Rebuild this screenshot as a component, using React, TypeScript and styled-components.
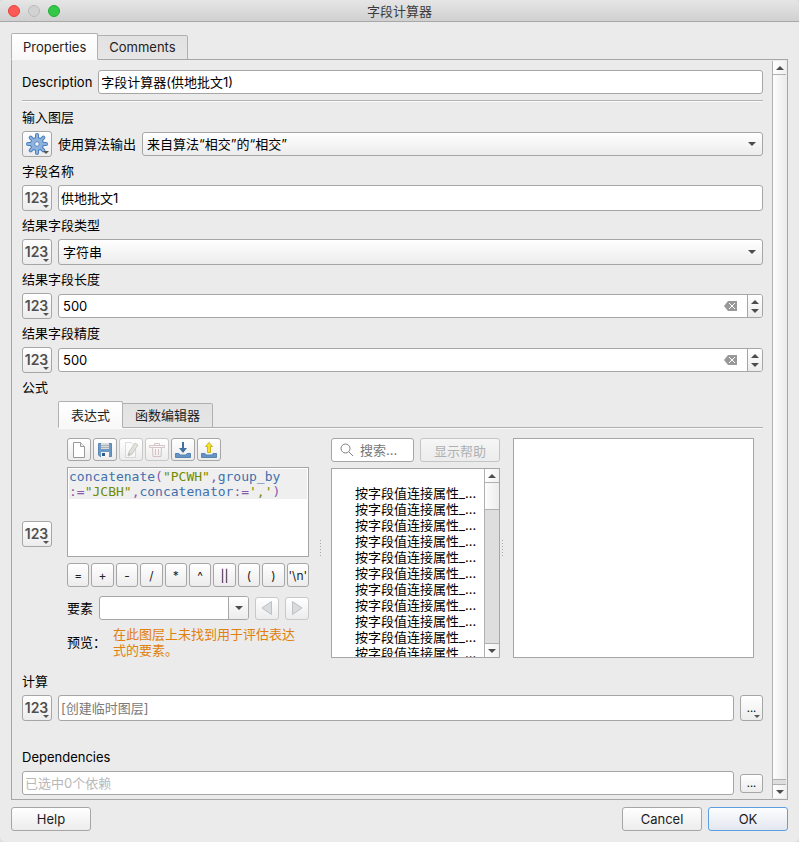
import React, { useState } from "react";
import styled, { createGlobalStyle, css } from "styled-components";

const sans = `Inter, "Noto Sans CJK SC", sans-serif`;
const edge = "#a6a6a6";

const GlobalStyle = createGlobalStyle`
  *, *::before, *::after { box-sizing: border-box; }
  body { margin: 0; background: #dcdcdc; }
  body, button, input, select { font-family: ${sans}; font-size: 13px; color: #000; }
  button, input, select { margin: 0; }
`;

const Dialog = styled.form`
  display: flex;
  flex-direction: column;
  min-height: 100vh;
  background: #ebebeb;
  border-radius: 5px;
  overflow: hidden;
`;

const TitleBar = styled.header`
  display: grid;
  grid-template-columns: 1fr auto 1fr;
  align-items: center;
  height: 22px;
  padding: 0 8px;
  background: linear-gradient(#e6e6e6, #d0d0d0);
  border-bottom: 1px solid #a8a8a8;
`;

const Lights = styled.div`
  display: flex;
  gap: 8px;
`;

const Light = styled.button<{ $fill: string; $ring: string }>`
  width: 12px;
  height: 12px;
  padding: 0;
  border-radius: 50%;
  background: ${(p) => p.$fill};
  border: 1px solid ${(p) => p.$ring};
`;

const Title = styled.h1`
  margin: 0;
  font-size: 13px;
  font-weight: 400;
  line-height: 20px;
  color: #3c3c3c;
`;

const Body = styled.main`
  flex: 1;
  display: flex;
  flex-direction: column;
  padding: 11px 11px 7px;
`;

const TabBar = styled.div`
  display: flex;
  align-items: flex-end;
  margin-bottom: -1px;
`;

const Tab = styled.button<{ $active?: boolean; $pad?: number }>`
  height: 25px;
  padding: 0 ${(p) => p.$pad ?? 11}px;
  line-height: 23px;
  color: #222;
  background: linear-gradient(#e2e2e2, #e6e6e6);
  border: 1px solid #b0b0b0;
  border-left: 0;
  border-radius: 0 2px 0 0;
  ${(p) =>
    p.$active &&
    css`
      height: 27px;
      padding-top: 1px;
      line-height: 25px;
      background: linear-gradient(#fff, #f8f8f8);
      border-left: 1px solid #b0b0b0;
      border-bottom-color: #f8f8f8;
      border-radius: 2px 2px 0 0;
      z-index: 1;
    `}
`;

const Pane = styled.section`
  flex: 1;
  display: flex;
  border: 1px solid ${edge};
  padding: 1px;
`;

const Fields = styled.div`
  flex: 1;
  min-width: 0;
  display: flex;
  flex-direction: column;
  padding: 9px 9px 3px;
`;

const Row = styled.div<{ $gap?: number }>`
  display: flex;
  align-items: center;
  gap: ${(p) => p.$gap ?? 6}px;
`;

const Caption = styled.label`
  display: block;
  white-space: nowrap;
  line-height: 24px;
`;

const FieldLabel = styled.label`
  display: block;
  height: 28px;
  line-height: 28px;
`;

const Rule = styled.hr`
  width: 100%;
  height: 2px;
  margin: 6px 0 1px;
  border: 0;
  border-top: 1px solid #b4b4b4;
  background: #fafafa;
`;

const TextBox = styled.input<{ $tall?: boolean; $dim?: string }>`
  flex: 1;
  min-width: 0;
  height: ${(p) => (p.$tall ? 26 : 24)}px;
  padding: 0 2px 1px;
  background: #fff;
  border: 1px solid ${edge};
  border-radius: 3px;
  outline: none;
  &::placeholder { color: ${(p) => p.$dim ?? "#7a7a7a"}; opacity: 1; }
`;

const raised = css`
  background: linear-gradient(#ffffff, #ececec);
  border: 1px solid ${edge};
  border-radius: 3px;
`;

const SelectFrame = styled.div<{ $tall?: boolean }>`
  flex: 1;
  min-width: 0;
  height: ${(p) => (p.$tall ? 26 : 24)}px;
  display: grid;
  grid-template-columns: 1fr 14px;
  align-items: center;
  ${raised}
  select {
    grid-area: 1 / 1 / 2 / 3;
    width: 100%;
    height: 100%;
    padding: 0 20px 0 4px;
    appearance: none;
    background: none;
    border: 0;
    outline: none;
  }
  svg { grid-area: 1 / 2; pointer-events: none; }
`;

const OverrideButton = styled.button`
  position: relative;
  flex: none;
  width: 30px;
  height: 26px;
  padding: 0 1px 1px 0;
  display: flex;
  align-items: center;
  justify-content: center;
  font-size: 14px;
  font-weight: 600;
  color: #505050;
  ${raised}
`;

const MenuMark = styled.svg`
  position: absolute;
  right: 2px;
  bottom: 2px;
`;

const SpinBox = styled.div`
  flex: 1;
  min-width: 0;
  height: 24px;
  display: flex;
  align-items: stretch;
  overflow: hidden;
  background: #fff;
  border: 1px solid ${edge};
  border-radius: 3px;
`;

const SpinInput = styled.input`
  flex: 1;
  min-width: 0;
  padding: 0 4px;
  border: 0;
  outline: none;
  background: none;
`;

const BareButton = styled.button`
  display: flex;
  align-items: center;
  justify-content: center;
  padding: 0;
  border: 0;
  background: none;
`;

const ClearButton = styled(BareButton)`
  width: 15px;
  margin-right: 9px;
`;

const Steps = styled.div`
  width: 15px;
  display: grid;
  grid-template-rows: 1fr 1fr;
  padding: 2px 0;
  border-left: 1px solid ${edge};
  background: linear-gradient(#fff, #ececec);
`;

const ScrollRail = styled.div<{ $width: number }>`
  flex: none;
  width: ${(p) => p.$width}px;
  display: flex;
  flex-direction: column;
  border-left: 1px solid #b0b0b0;
  background: #dedede;
`;

const ScrollArrow = styled(BareButton)`
  flex: none;
  height: 13px;
  background: linear-gradient(90deg, #fff, #f0f0f0);
`;

const Thumb = styled.div<{ $size?: number }>`
  ${(p) => (p.$size ? `height: ${p.$size}px;` : "flex: 1;")}
  border: solid #b0b0b0;
  border-width: 1px 0;
  background: linear-gradient(90deg, #fdfdfd, #ececec);
`;

const Groove = styled.div<{ $size?: number }>`
  ${(p) => (p.$size ? `height: ${p.$size}px;` : "flex: 1;")}
  border-bottom: 1px solid #b0b0b0;
`;

const Builder = styled.div`
  flex: 1;
  min-width: 0;
`;

const BuilderBody = styled.div`
  display: grid;
  grid-template-columns: minmax(0, 242fr) 22px minmax(0, 169fr) 13px minmax(0, 241fr);
  padding: 10px 9px 9px;
  border-top: 1px solid #b0b0b0;
  box-shadow: inset 0 1px #fafafa;
`;

const Column = styled.div`
  display: flex;
  flex-direction: column;
  gap: 6px;
  min-width: 0;
`;

const Handle = styled.div<{ $near?: boolean }>`
  align-self: center;
  justify-self: ${(p) => (p.$near ? "start" : "center")};
  width: 1px;
  height: 17px;
  margin-left: ${(p) => (p.$near ? 2 : 0)}px;
  background: repeating-linear-gradient(#aaa 0 1px, transparent 1px 3px);
`;

const ToolButton = styled.button`
  width: 24px;
  height: 23px;
  padding: 0;
  display: flex;
  align-items: center;
  justify-content: center;
  ${raised}
  &:disabled { border-color: #c8c8c8; }
`;

const Code = styled.div`
  height: 90px;
  padding: 1px;
  background: #fff;
  border: 1px solid ${edge};
  outline: none;
  font-family: "DejaVu Sans Mono", monospace;
  font-size: 13px;
  line-height: 15px;
  white-space: pre-wrap;
  word-break: break-all;
`;

const CodeLine = styled.div`
  background: #efefef;
`;

const Token = styled.span<{ $kind: "name" | "op" | "text" }>`
  color: ${(p) => ({ name: "#4271ae", op: "#8959a8", text: "#718c00" })[p.$kind]};
`;

const Operators = styled.div`
  display: grid;
  grid-template-columns: repeat(10, minmax(0, 1fr));
  gap: 2px;
`;

const OperatorButton = styled.button`
  height: 24px;
  padding: 0;
  white-space: nowrap;
  font-size: 12px;
  color: #222;
  ${raised}
`;

const FeatureRow = styled(Row)`
  margin-top: 3px;
`;

const Combo = styled.div`
  flex: 1;
  min-width: 0;
  height: 24px;
  display: flex;
  overflow: hidden;
  background: #fff;
  border: 1px solid ${edge};
  border-radius: 3px;
`;

const ComboButton = styled(BareButton)`
  width: 20px;
  border-left: 1px solid ${edge};
  background: linear-gradient(#fff, #ececec);
`;

const Preview = styled.div`
  display: grid;
  grid-template-columns: 46px 1fr;
  align-items: center;
  line-height: 16px;
`;

const Warning = styled.output`
  padding-right: 8px;
  color: #e0800d;
`;

const SearchRow = styled.div`
  display: grid;
  grid-template-columns: minmax(0, 83fr) minmax(0, 80fr);
  gap: 6px;
`;

const Search = styled.label`
  height: 24px;
  display: flex;
  align-items: center;
  gap: 6px;
  padding-left: 8px;
  background: #fff;
  border: 1px solid ${edge};
  border-radius: 3px;
  svg { flex: none; }
  input {
    width: 100%;
    min-width: 0;
    padding: 0;
    border: 0;
    outline: none;
    background: none;
  }
  input::placeholder { color: #777; opacity: 1; }
`;

const HelpToggle = styled.button`
  height: 24px;
  padding: 0;
  ${raised}
  &:disabled { border-color: #c4c4c4; color: #b0b0b0; background: linear-gradient(#f6f6f6, #ececec); }
`;

const ListFrame = styled.div`
  display: flex;
  height: 190px;
  background: #fff;
  border: 1px solid ${edge};
`;

const FunctionList = styled.ul`
  flex: 1;
  min-width: 0;
  margin: 0;
  padding: 16px 0 0 23px;
  overflow: hidden;
  list-style: none;
  line-height: 16px;
  white-space: nowrap;
`;

const HelpView = styled.div`
  background: #fff;
  border: 1px solid ${edge};
`;

const BrowseButton = styled.button<{ $tall?: boolean }>`
  position: relative;
  flex: none;
  width: 23px;
  height: ${(p) => (p.$tall ? 26 : 19)}px;
  padding: 0;
  font-size: 11px;
  line-height: 12px;
  ${raised}
`;

const DependenciesLabel = styled(FieldLabel)`
  margin-top: 22px;
`;

const Footer = styled.footer`
  display: flex;
  gap: 6px;
  padding: 0 11px 11px;
`;

const PushButton = styled.button<{ $primary?: boolean }>`
  width: 80px;
  height: 24px;
  padding: 0;
  color: #1c1c1c;
  ${raised}
  ${(p) =>
    p.$primary &&
    css`
      border-color: #5e9fe4;
      background: linear-gradient(#fdfdfe, #e2e7ef);
    `}
`;

const Spacer = styled.span`
  flex: 1;
`;

const Arrow = ({ up }: { up?: boolean }) => (
  <svg width="8" height="4" viewBox="0 0 8 4" aria-hidden="true">
    <path d={up ? "M0 4L4 0L8 4Z" : "M0 0H8L4 4Z"} fill="#4c4c4c" />
  </svg>
);

const Mark = () => (
  <MenuMark width="6" height="3" viewBox="0 0 6 3" aria-hidden="true">
    <path d="M0 0H6L3 3Z" fill="#555" />
  </MenuMark>
);

const spokes = [0, 45, 90, 135, 180, 225, 270, 315];

const Gear = () => (
  <svg width="24" height="24" viewBox="0 0 24 24" aria-hidden="true">
    {[
      { stroke: "#4b80bf", w: 4, r: 7, tip: 3 },
      { stroke: "#8fb2dd", w: 2, r: 6, tip: 3 },
    ].map((l) => (
      <g key={l.w} stroke={l.stroke} fill={l.stroke} strokeWidth={l.w} strokeLinecap="round">
        {spokes.map((a) => (
          <path key={a} d={`M12 8V${l.tip}`} transform={`rotate(${a} 12 12)`} />
        ))}
        <circle cx="12" cy="12" r={l.r} stroke="none" />
      </g>
    ))}
    <circle cx="12" cy="12" r="2.3" fill="#f5f5f5" stroke="#5a8bc6" />
  </svg>
);

const Override = ({ gear }: { gear?: boolean }) => (
  <OverrideButton type="button" aria-label={gear ? "数据源" : undefined}>
    {gear ? <Gear /> : "123"}
    <Mark />
  </OverrideButton>
);

const SpinField = ({ id }: { id: string }) => {
  const [value, setValue] = useState("500");
  const step = (d: number) => setValue(String((Number(value) || 0) + d));
  return (
    <Row>
      <Override />
      <SpinBox>
        <SpinInput id={id} inputMode="numeric" value={value} onChange={(e) => setValue(e.target.value)} />
        <ClearButton type="button" aria-label="清除" onClick={() => setValue("")}>
          <svg width="13" height="10" viewBox="0 0 13 10" aria-hidden="true">
            <path d="M0 5L4 0H13V10H4Z" fill="#989898" />
            <path d="M5 2L11 8M11 2L5 8" stroke="#fff" />
          </svg>
        </ClearButton>
        <Steps>
          <BareButton type="button" aria-label="增加" onClick={() => step(1)}><Arrow up /></BareButton>
          <BareButton type="button" aria-label="减少" onClick={() => step(-1)}><Arrow /></BareButton>
        </Steps>
      </SpinBox>
    </Row>
  );
};

const NewIcon = () => (
  <svg width="18" height="18" viewBox="0 0 18 18" aria-hidden="true">
    <path d="M3.5 1.5H10.5L14.5 5.5V16.5H3.5Z" fill="#fff" stroke="#999" />
    <path d="M10.5 1.5V5.5H14.5" fill="#eee" stroke="#999" />
  </svg>
);

const SaveIcon = () => (
  <svg width="18" height="18" viewBox="0 0 18 18" aria-hidden="true">
    <path d="M2.5 2.5H15.5V15.5H4L2.5 14Z" fill="#6c9ac6" stroke="#5b87b2" />
    <path d="M5 2H13V8H5Z" fill="#dcdcdc" />
    <path d="M5 4.5H13M5 6.5H13" stroke="#a9b1b8" />
    <path d="M5 11H13V16H5Z" fill="#f4f4f4" />
    <path d="M6 12H9V15H6Z" fill="#365b80" />
  </svg>
);

const EditIcon = () => (
  <svg width="18" height="18" viewBox="0 0 18 18" opacity=".45" aria-hidden="true">
    <path d="M3.5 1.5H9L13.5 6V16.5H3.5Z" fill="#fff" stroke="#bbb" />
    <path d="M6 15L7 11L13 2L16 4L10 13Z" fill="#c7cdbb" stroke="#8c9484" />
    <path d="M6 15L7 12L9 13Z" fill="#777" />
  </svg>
);

const TrashIcon = () => (
  <svg width="18" height="18" viewBox="0 0 18 18" fill="none" stroke="#c4a2a6" opacity=".6" aria-hidden="true">
    <path d="M6.5 4V2.5H11.5V4M1.5 4.5H16.5V6.5H1.5Z" />
    <path d="M4.5 7L5 15.5H13L13.5 7M7.5 8V14M10.5 8V14" />
  </svg>
);

const TransferIcon = ({ up }: { up?: boolean }) => (
  <svg width="18" height="18" viewBox="0 0 18 18" aria-hidden="true">
    <path d="M1.5 12.5H5L6 14H12L13 12.5H16.5V16.5H1.5Z" fill="#6694c2" stroke="#5583b2" />
    {up ? (
      <path d="M9 1.5L12.5 5.5H10.5V11.5H7.5V5.5H5.5Z" fill="#f3e32e" stroke="#cbb51a" />
    ) : (
      <path d="M8 1H10V7H13L9 12L5 7H8Z" fill="#41709f" />
    )}
  </svg>
);

const Triangle = ({ right }: { right?: boolean }) => (
  <svg width="14" height="16" viewBox="0 0 14 16" aria-hidden="true">
    <path d={right ? "M2.5 1.5L12 8L2.5 14.5Z" : "M11.5 1.5L2 8L11.5 14.5Z"} fill="#d9dbdd" stroke="#bdc1c4" />
  </svg>
);

const operators = ["=", "+", "-", "/", "*", "^", "||", "(", ")", "'\\n'"];

const Scroll = ({ width, children }: { width: number; children: React.ReactNode }) => (
  <ScrollRail $width={width}>
    <ScrollArrow type="button" aria-label="向上滚动"><Arrow up /></ScrollArrow>
    {children}
    <ScrollArrow type="button" aria-label="向下滚动"><Arrow /></ScrollArrow>
  </ScrollRail>
);

const ExpressionColumn = () => (
  <Column>
    <Row $gap={2}>
      <ToolButton type="button" aria-label="新建"><NewIcon /></ToolButton>
      <ToolButton type="button" aria-label="保存"><SaveIcon /></ToolButton>
      <ToolButton type="button" aria-label="编辑" disabled><EditIcon /></ToolButton>
      <ToolButton type="button" aria-label="删除" disabled><TrashIcon /></ToolButton>
      <ToolButton type="button" aria-label="导入"><TransferIcon /></ToolButton>
      <ToolButton type="button" aria-label="导出"><TransferIcon up /></ToolButton>
    </Row>
    <Code role="textbox" aria-multiline="true" aria-label="表达式" contentEditable suppressContentEditableWarning spellCheck={false}>
      <CodeLine>
        <Token $kind="name">concatenate</Token>
        <Token $kind="op">(</Token>
        <Token $kind="text">"PCWH"</Token>
        <Token $kind="op">,</Token>
        <Token $kind="name">group_by</Token>
        <br />
        <Token $kind="op">:=</Token>
        <Token $kind="text">"JCBH"</Token>
        <Token $kind="op">,</Token>
        <Token $kind="name">concatenator</Token>
        <Token $kind="op">:=</Token>
        <Token $kind="text">','</Token>
        <Token $kind="op">)</Token>
      </CodeLine>
    </Code>
    <Operators>
      {operators.map((o) => (
        <OperatorButton type="button" key={o}>{o}</OperatorButton>
      ))}
    </Operators>
    <FeatureRow>
      <Caption htmlFor="feature">要素</Caption>
      <Combo>
        <SpinInput id="feature" />
        <ComboButton type="button" aria-label="选择要素"><Arrow /></ComboButton>
      </Combo>
      <ToolButton type="button" aria-label="上一个" disabled><Triangle /></ToolButton>
      <ToolButton type="button" aria-label="下一个" disabled><Triangle right /></ToolButton>
    </FeatureRow>
    <Preview>
      <span>预览：</span>
      <Warning>在此图层上未找到用于评估表达式的要素。</Warning>
    </Preview>
  </Column>
);

const FunctionColumn = () => (
  <Column>
    <SearchRow>
      <Search>
        <svg width="14" height="14" viewBox="0 0 14 14" fill="none" stroke="#808080" aria-hidden="true">
          <circle cx="5.5" cy="5.5" r="4.5" />
          <path d="M9 9L13 13" />
        </svg>
        <input aria-label="搜索" placeholder="搜索..." />
      </Search>
      <HelpToggle type="button" disabled>显示帮助</HelpToggle>
    </SearchRow>
    <ListFrame>
      <FunctionList>
        {Array.from({ length: 11 }, (_, i) => (
          <li key={i}>按字段值连接属性_...</li>
        ))}
      </FunctionList>
      <Scroll width={15}>
        <Thumb $size={28} />
        <Groove />
      </Scroll>
    </ListFrame>
  </Column>
);

export default function App() {
  const [description, setDescription] = useState("字段计算器(供地批文1)");
  const [fieldName, setFieldName] = useState("供地批文1");
  return (
    <>
      <GlobalStyle />
      <Dialog onSubmit={(e) => e.preventDefault()}>
        <TitleBar>
          <Lights>
            <Light type="button" aria-label="关闭" $fill="#fb5b54" $ring="#e2443d" />
            <Light type="button" aria-label="最小化" $fill="#d2d2d2" $ring="#bababa" />
            <Light type="button" aria-label="缩放" $fill="#34c748" $ring="#22ad34" />
          </Lights>
          <Title>字段计算器</Title>
        </TitleBar>
        <Body>
          <TabBar role="tablist">
            <Tab type="button" role="tab" aria-selected $active>Properties</Tab>
            <Tab type="button" role="tab" aria-selected={false}>Comments</Tab>
          </TabBar>
          <Pane>
            <Fields>
              <Row>
                <Caption htmlFor="description">Description</Caption>
                <TextBox id="description" value={description} onChange={(e) => setDescription(e.target.value)} />
              </Row>
              <Rule />
              <FieldLabel htmlFor="source">输入图层</FieldLabel>
              <Row>
                <Override gear />
                <Caption htmlFor="source">使用算法输出</Caption>
                <SelectFrame>
                  <select id="source"><option>来自算法“相交”的“相交”</option></select>
                  <Arrow />
                </SelectFrame>
              </Row>
              <FieldLabel htmlFor="name">字段名称</FieldLabel>
              <Row>
                <Override />
                <TextBox id="name" $tall value={fieldName} onChange={(e) => setFieldName(e.target.value)} />
              </Row>
              <FieldLabel htmlFor="type">结果字段类型</FieldLabel>
              <Row>
                <Override />
                <SelectFrame $tall>
                  <select id="type"><option>字符串</option></select>
                  <Arrow />
                </SelectFrame>
              </Row>
              <FieldLabel htmlFor="length">结果字段长度</FieldLabel>
              <SpinField id="length" />
              <FieldLabel htmlFor="precision">结果字段精度</FieldLabel>
              <SpinField id="precision" />
              <FieldLabel as="div">公式</FieldLabel>
              <Row>
                <Override />
                <Builder>
                  <TabBar role="tablist">
                    <Tab type="button" role="tab" aria-selected $active $pad={12}>表达式</Tab>
                    <Tab type="button" role="tab" aria-selected={false} $pad={12}>函数编辑器</Tab>
                  </TabBar>
                  <BuilderBody>
                    <ExpressionColumn />
                    <Handle />
                    <FunctionColumn />
                    <Handle $near />
                    <HelpView />
                  </BuilderBody>
                </Builder>
              </Row>
              <FieldLabel htmlFor="output">计算</FieldLabel>
              <Row>
                <Override />
                <TextBox id="output" $tall placeholder="[创建临时图层]" />
                <BrowseButton type="button" $tall>...<Mark /></BrowseButton>
              </Row>
              <DependenciesLabel htmlFor="dependencies">Dependencies</DependenciesLabel>
              <Row>
                <TextBox id="dependencies" $dim="#b8b8b8" placeholder="已选中0个依赖" />
                <BrowseButton type="button">...</BrowseButton>
              </Row>
            </Fields>
            <Scroll width={14}>
              <Thumb />
              <Groove $size={5} />
            </Scroll>
          </Pane>
        </Body>
        <Footer>
          <PushButton type="button">Help</PushButton>
          <Spacer />
          <PushButton type="button">Cancel</PushButton>
          <PushButton type="submit" $primary>OK</PushButton>
        </Footer>
      </Dialog>
    </>
  );
}
